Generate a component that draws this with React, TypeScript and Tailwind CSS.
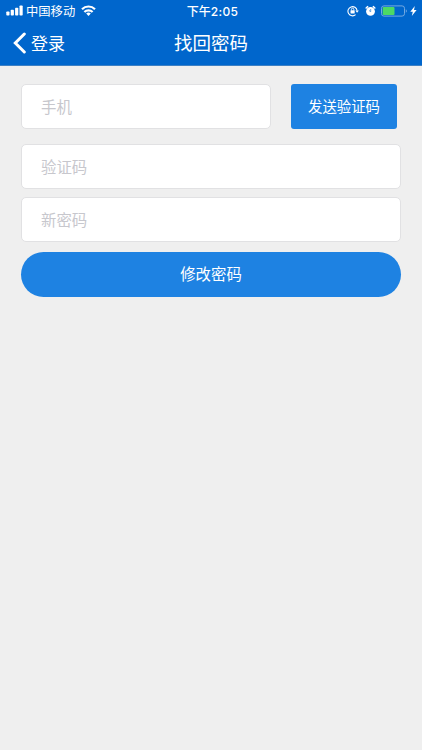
const fields = [
  { name: 'code', placeholder: '验证码', type: 'text' },
  { name: 'password', placeholder: '新密码', type: 'password' },
];

const inputClass =
  'h-[45px] w-full min-w-0 rounded-[5px] border border-[#e1e1e3] bg-white px-[19px] pb-[2px] text-[15.4px] outline-none placeholder:text-[#c7c7cd]';

function StatusBar() {
  return (
    <div className="grid h-[21px] grid-cols-[1fr_auto_1fr] items-center pl-[6px] pr-[5px]">
      <div className="flex items-center">
        <svg width="17" height="11" viewBox="0 0 17 11" fill="currentColor">
          <rect x="0.3" y="6.5" width="3.2" height="4" rx="0.8" />
          <rect x="4.7" y="4.8" width="3.2" height="5.7" rx="0.8" />
          <rect x="9.1" y="2.8" width="3.2" height="7.7" rx="0.8" />
          <rect x="13.5" y="0.5" width="3.2" height="10" rx="0.8" />
        </svg>
        <span className="ml-[3px] mt-px text-[12.3px] leading-none">中国移动</span>
        <svg
          className="ml-[6px]"
          width="15"
          height="11"
          viewBox="0 0 15 11"
          fill="none"
          stroke="currentColor"
          strokeWidth="2.2"
        >
          <path d="M1 4.2a9.2 9.2 0 0 1 13 0" />
          <path d="M3.4 7a5.8 5.8 0 0 1 8.2 0" />
          <path d="M7.5 10.9 5.2 8.6a3.3 3.3 0 0 1 4.6 0z" fill="currentColor" stroke="none" />
        </svg>
      </div>

      <p className="mt-px pl-[2px] text-[12px] font-medium leading-none">
        下午<span className="font-[Inter,sans-serif] tracking-[0.3px]">2:05</span>
      </p>

      <div className="flex items-center justify-end">
        <svg width="12" height="12" viewBox="0 0 12 12" fill="none" stroke="currentColor">
          <path d="M8.6 9.7A4.6 4.6 0 1 1 10.1 5.6" strokeWidth="1.1" />
          <path d="M8.4 5.4h3.4l-1.7 2.3z" fill="currentColor" stroke="none" />
          <rect x="3.5" y="5.3" width="4.2" height="3.1" rx="0.4" fill="currentColor" stroke="none" />
          <path d="M4.4 5.4V4.4a1.2 1.2 0 0 1 2.4 0v1" strokeWidth="0.9" />
        </svg>
        <svg className="ml-[6px]" width="11" height="12" viewBox="0 0 11 12" fill="currentColor">
          <circle cx="5.5" cy="6.4" r="4.4" />
          <path
            d="M1.1 3 2.7 1.6M9.9 3 8.3 1.6"
            stroke="currentColor"
            strokeWidth="1.4"
            strokeLinecap="round"
          />
          <path d="M5.7 4v2.7L4 5.5" fill="none" stroke="#0066cc" strokeWidth="0.6" />
        </svg>
        <svg className="ml-[5px]" width="27" height="12" viewBox="0 0 27 12">
          <rect x="0.5" y="0.9" width="23" height="10.2" rx="2.4" fill="none" stroke="#73a9e1" />
          <rect x="1.7" y="2" width="11.8" height="8" rx="1" fill="#4cd964" />
          <path d="M24.8 4.3c1.4.5 1.4 2.9 0 3.4z" fill="#73a9e1" />
        </svg>
        <svg className="ml-[2px]" width="7" height="10" viewBox="0 0 7 10" fill="currentColor">
          <path d="M4.8 0 .3 5.7h2.5L1.8 10l4.8-6H4z" />
        </svg>
      </div>
    </div>
  );
}

export default function App() {
  return (
    <div className="min-h-screen bg-[#efefef] font-['Noto_Sans_CJK_SC',sans-serif]">
      <header className="h-[66px] border-b border-[#3d80c4] bg-[#0066cc] text-white">
        <StatusBar />
        <div className="grid h-[44px] grid-cols-[1fr_auto_1fr] items-center">
          <a href="#" className="flex items-center pl-[12px]">
            <svg
              width="14"
              height="22"
              viewBox="0 0 14 22"
              fill="none"
              stroke="currentColor"
              strokeWidth="3"
              strokeLinecap="round"
            >
              <path d="M12.3 2 3.3 11l9 9" />
            </svg>
            <span className="-mt-px ml-[5px] text-[17px] leading-none">登录</span>
          </a>
          <h1 className="-mt-[2px] text-[18.5px] leading-none">找回密码</h1>
        </div>
      </header>

      <form className="px-[21px] pt-[18px]">
        <div className="flex justify-between pr-[4px]">
          <div className="w-[250px]">
            <input className={inputClass} name="phone" placeholder="手机" />
          </div>
          <button
            type="button"
            className="h-[45px] w-[106px] rounded-[3px] bg-[#1e82e2] pb-[2px] text-[14.4px] text-white"
          >
            发送验证码
          </button>
        </div>

        <div className="mt-[15px] flex flex-col gap-2">
          {fields.map((field) => (
            <input
              key={field.name}
              className={inputClass}
              name={field.name}
              type={field.type}
              placeholder={field.placeholder}
            />
          ))}
        </div>

        <button
          type="button"
          className="mt-[10px] h-[45px] w-full rounded-full bg-[#1e82e2] pb-[2px] text-[15.4px] text-white"
        >
          修改密码
        </button>
      </form>
    </div>
  );
}
